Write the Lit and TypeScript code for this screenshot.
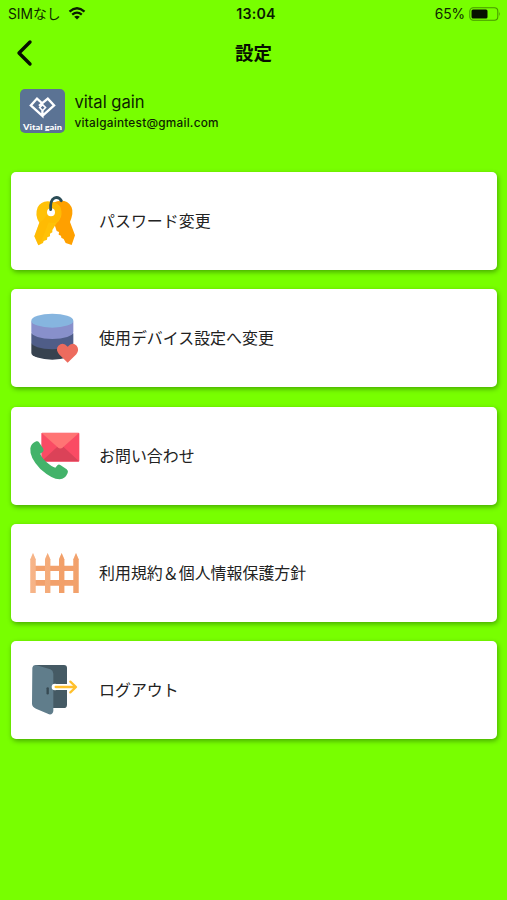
import { LitElement, html, css, svg } from "lit";
import { customElement } from "lit/decorators.js";

const keys = svg`
  <path d="M84 52Q108 42 126 50Q145 62 142 86Q140 98 135 110L150 150L140 179L122 173L116 161L109 157L108 151L101 148L102 140L95 137L90 122L84 110Z" fill="#ffa000"/>
  <path d="M38 66Q47 49 68 48Q92 49 104 62Q112 76 108 94Q103 108 95 113L88 124L82 134L82 141L75 145L75 153L67 156L66 163L56 167L54 173L40 180L28 153L43 112Q28 91 38 66Z" fill="#ffc107"/>
  <path d="M80 49Q98 53 108 68Q112 91 98 109Q84 116 71 111L46 177L40 180L28 153L43 112Q65 102 80 49Z" fill="#ffb300" opacity=".45"/>
  <circle cx="78" cy="81" r="12" fill="#fff"/>
  <path d="M77 73Q75 44 88 38Q101 33 109 46" fill="none" stroke="#2c4d57" stroke-width="8.5" stroke-linecap="round"/>`;

const database = svg`
  <path d="M34 143V158A63 21 0 0 0 160 158V130H34Z" fill="#37424f"/>
  <path d="M34 115V127A63 21 0 0 0 160 127V100H34Z" fill="#4f5d88"/>
  <path d="M34 64V96A63 21 0 0 0 160 96V64Z" fill="#8890cb"/>
  <ellipse cx="97" cy="62" rx="63" ry="21" fill="#86b5df"/>
  <path d="M143 188L117 163Q106 147 115 137Q129 124 143 140Q157 124 170 137Q179 148 169 163Z" fill="#ed6b5e"/>`;

const contact = svg`
  <rect x="64" y="36" width="114" height="87" rx="3" fill="#fa4b64"/>
  <path d="M65 122L112 78H130L177 122Z" fill="#db4258"/>
  <path d="M65 37H177L129 80Q121 87 113 80Z" fill="#ff7474"/>
  <path d="M49 62Q54 60 57 65L70 84Q72 91 68 94L61 99Q65 111 80 125Q96 139 106 141L113 133Q117 130 122 134L140 146Q146 151 143 157Q136 174 119 176Q96 176 61 145Q28 111 31 83Q33 68 49 62Z" fill="#43b36a"/>`;

const fence = svg`
  <defs><linearGradient id="wood" x1="0" y1="0" x2="1" y2="0"><stop offset="0" stop-color="#f8bc91"/><stop offset="1" stop-color="#ef965c"/></linearGradient></defs>
  <path d="M40 76H170V92H40ZM40 119H170V136H40Z" fill="#f2a06b"/>
  <path d="M31 158V57L39 38L47 57V158Z" fill="#f6b184"/>
  <path d="M75 158V57L83 38L91 57V158Z" fill="#f4aa78"/>
  <path d="M117 158V57L125 38L133 57V158Z" fill="#f29e66"/>
  <path d="M160 158V57L168 38L176 57V158Z" fill="#f3a673"/>
  <path d="M31 158V57L39 38L47 57V158ZM75 158V57L83 38L91 57V158ZM117 158V57L125 38L133 57V158ZM160 158V57L168 38L176 57V158Z" fill="url(#wood)" opacity=".35"/>`;

const logout = svg`
  <path d="M46 30H132Q141 30 141 39V149Q141 159 131 159H46Z" fill="#455a64"/>
  <path d="M37 38Q39 28 50 31L91 43Q99 46 100 56V168Q98 180 87 178L48 161Q37 157 36 147Z" fill="#607d8b"/>
  <path d="M83 100V115" stroke="#374a53" stroke-width="7" stroke-linecap="round"/>
  <circle cx="105" cy="96" r="10" fill="#fff"/>
  <path d="M106 87H141V105H106Z" fill="#fff"/>
  <path d="M107 96H167M151 80L168 96L151 112" fill="none" stroke="#ffc02d" stroke-width="7" stroke-linecap="round" stroke-linejoin="round"/>`;

const items = [
  { label: "パスワード変更", box: "-15 2 210 210", icon: keys },
  { label: "使用デバイス設定へ変更", box: "0 9 210 210", icon: database },
  { label: "お問い合わせ", box: "0 1 210 210", icon: contact },
  { label: "利用規約＆個人情報保護方針", box: "0 -7 210 210", icon: fence },
  { label: "ログアウト", box: "0 0 210 210", icon: logout },
];

@customElement("app-root")
export class AppRoot extends LitElement {
  static styles = css`
    :host {
      display: flex;
      flex-direction: column;
      box-sizing: border-box;
      height: 900px;
      overflow: hidden;
      background: #78ff00;
      color: #111;
      font-family: Inter, "Noto Sans CJK JP", sans-serif;
    }
    svg { display: block; flex: none; }
    .status, .nav {
      display: grid;
      grid-template-columns: 1fr auto 1fr;
      align-items: center;
    }
    .status {
      height: 27px;
      padding: 0 6px 0 8px;
      font-size: 13.8px;
      color: #0d2600;
    }
    .carrier, .power { display: flex; align-items: center; }
    .carrier { gap: 7px; }
    .carrier span { margin-top: -2px; }
    .power { justify-content: flex-end; gap: 4px; }
    .power span { letter-spacing: -0.1px; }
    .time { font-weight: 600; font-size: 14.2px; letter-spacing: 0.2px; color: #0a1c00; padding-left: 3px; }
    .nav { height: 51px; padding: 0 16px; }
    .title { margin: 0; font-size: 18.5px; font-weight: 700; line-height: 28px; color: #071000; }
    .profile {
      display: flex;
      align-items: center;
      gap: 10px;
      height: 44px;
      margin: 11px 0 39px 20px;
    }
    .profile-text { padding-top: 3px; }
    .name { font-size: 16.6px; line-height: 22px; color: #0d1f00; margin-left: -0.5px; }
    .mail { font-size: 11.8px; line-height: 21px; letter-spacing: 0.24px; color: #0d1f00; font-weight: 500; margin-left: -0.5px; }
    .list { display: flex; flex-direction: column; gap: 19.3px; padding: 0 10px 0 11px; }
    .card {
      display: flex;
      align-items: center;
      gap: 9px;
      height: 98px;
      box-sizing: border-box;
      padding-left: 9px;
      border-radius: 5px;
      background: #fff;
      box-shadow: 1px 2px 5px rgba(0, 50, 0, 0.42);
      font-size: 15.95px;
      color: #222;
    }
    .label { padding-bottom: 2px; }
    .logo-text { font: 900 7.6px "Lato", sans-serif; }
  `;

  render() {
    return html`
      <div class="status">
        <div class="carrier">
          <span>SIMなし</span>
          <svg width="18" height="13" viewBox="0 0 18 13">
            <path d="M1.5 4.6Q9-2 16.5 4.6M4.2 7.6Q9 3.6 13.8 7.6" fill="none" stroke="#0a1c00" stroke-width="2.3"/>
            <path d="M6.2 9.7Q9 7.7 11.8 9.7L9 12.5Z" fill="#0a1c00"/>
          </svg>
        </div>
        <div class="time">13:04</div>
        <div class="power">
          <span>65%</span>
          <svg width="32" height="14" viewBox="0 0 32 14">
            <rect x=".8" y=".8" width="28" height="12.4" rx="3.5" fill="none" stroke="#469600" stroke-width="1.1"/>
            <rect x="2.5" y="2.5" width="16" height="9" rx="1.5" fill="#071000"/>
            <path d="M30.3 4.8Q31.8 7 30.3 9.2Z" fill="#469600"/>
          </svg>
        </div>
      </div>
      <div class="nav">
        <svg width="18" height="28" viewBox="0 0 18 28">
          <path d="M14 3L3 14L14 25" fill="none" stroke="#071000" stroke-width="3.4" stroke-linecap="round" stroke-linejoin="round"/>
        </svg>
        <h1 class="title">設定</h1>
      </div>
      <div class="profile">
        <svg width="45" height="44" viewBox="0 0 45 44">
          <rect width="45" height="44" rx="5" fill="#5b7394"/>
          <path d="M23 15L17 9.6L10.8 16.4L22.4 26.8V21.5M19 16.8L27.8 9.6L34.1 16.4L22.4 26.8" fill="none" stroke="#fff" stroke-width="2.3"/>
          <path d="M22.6 15.6L25.6 18.6L22.6 21.6L19.6 18.6Z" fill="none" stroke="#fff" stroke-width="1.5"/>
          <text class="logo-text" x="3" y="40.5" textLength="39" lengthAdjust="spacingAndGlyphs" fill="#fff">Vital gain</text>
        </svg>
        <div class="profile-text">
          <div class="name">vital gain</div>
          <div class="mail">vitalgaintest@gmail.com</div>
        </div>
      </div>
      <div class="list">
        ${items.map(
          (item) => html`
            <div class="card">
              <svg width="70" height="70" viewBox=${item.box}>${item.icon}</svg>
              <span class="label">${item.label}</span>
            </div>
          `
        )}
      </div>
    `;
  }
}
